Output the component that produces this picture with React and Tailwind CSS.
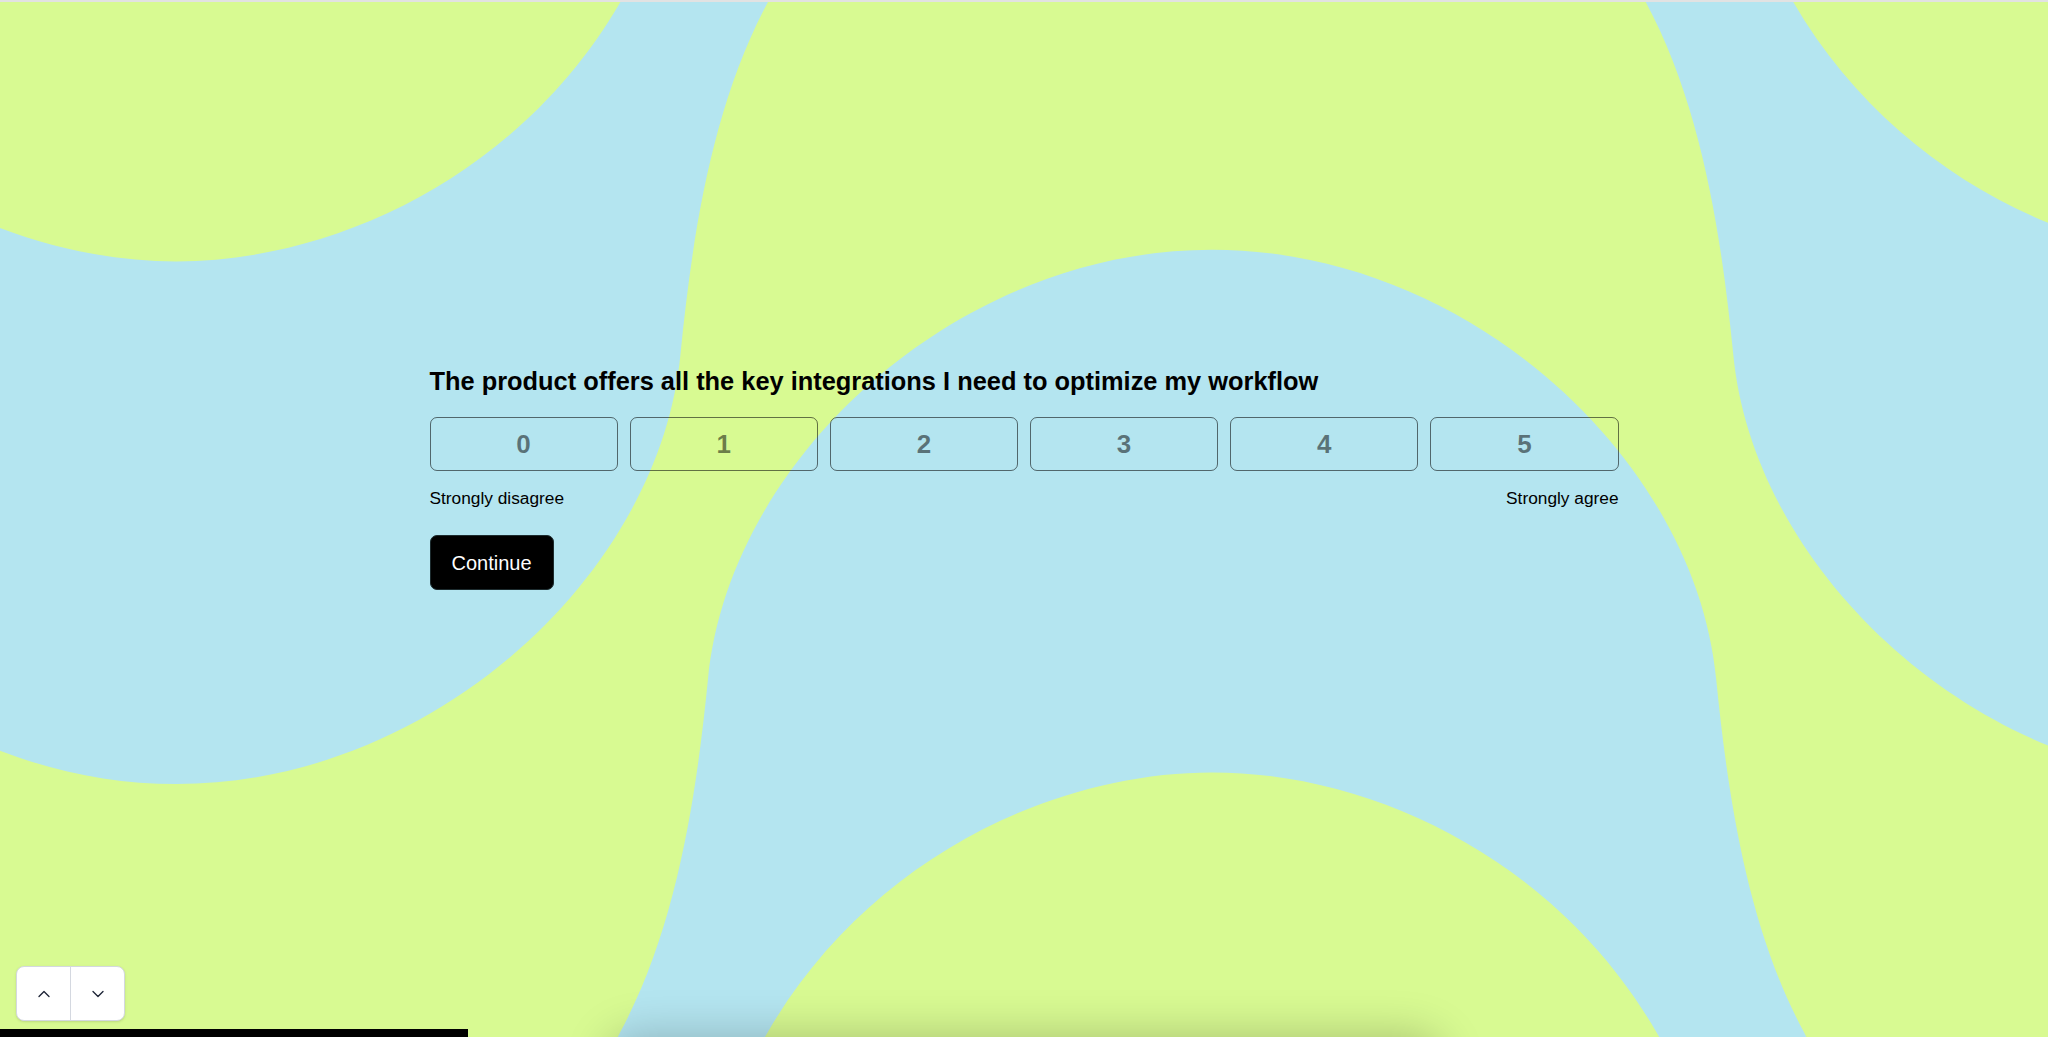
import { ChevronUp, ChevronDown } from 'lucide-react';

const OPTIONS = [0, 1, 2, 3, 4, 5];

// one blue U-shaped band, centred on x=135 (viewBox units); arms run a little past the edge
const BAND =
  'M 594 -12 L 588 0 C 545 80 530 180 521 270 C 505 440 330 600 135 600 C -60 600 -235 440 -251 270 ' +
  'C -260 180 -275 80 -318 0 L -324 -12 L -212 -12 L -205 0 C -130 130 10 199 135 199 C 260 199 400 130 475 0 L 482 -12 Z';

function Backdrop() {
  return (
    <svg className="absolute inset-0 w-full h-full" viewBox="0 0 1568 794" preserveAspectRatio="none">
      <rect width="1568" height="794" fill="#d8fa92" />
      <g fill="#b4e5f0">
        <path d={BAND} />
        <path d={BAND} transform="translate(1578 0)" />
        <path d={BAND} transform="matrix(-1 0 0 -1 1063 790)" />
      </g>
    </svg>
  );
}

export default function App() {
  return (
    <div className="relative w-full h-[1037px] overflow-hidden border-t-2 border-[#e2e2e2] font-['Liberation_Sans',Arial,sans-serif]">
      <Backdrop />

      <div className="relative flex justify-center pt-[363px]">
        <div className="w-[1189px]">
          <h1 className="text-[25.4px] leading-8 font-bold text-black">
            The product offers all the key integrations I need to optimize my workflow
          </h1>

          <div className="mt-5 grid grid-cols-6 gap-3">
            {OPTIONS.map((n) => (
              <button key={n} className="h-[54px] rounded-[7px] border border-black/55 text-[26px] font-bold text-black/50">
                {n}
              </button>
            ))}
          </div>

          <div className="mt-[15px] flex justify-between text-[17.3px] leading-6 text-black">
            <span>Strongly disagree</span>
            <span>Strongly agree</span>
          </div>

          <button className="mt-[25px] h-[55px] px-[21px] rounded-[7px] bg-black border border-[#1c2b2e] text-white text-[20px]">
            Continue
          </button>
        </div>
      </div>

      <div className="absolute left-4 top-[964px] flex h-[55px] w-[109px] rounded-lg border border-[#d4d8e0] bg-white shadow-sm">
        <button className="flex flex-1 items-center justify-center border-r border-[#d4d8e0] text-[#1e2537]">
          <ChevronUp className="w-5 h-5" strokeWidth={1.6} />
        </button>
        <button className="flex flex-1 items-center justify-center text-[#1e2537]">
          <ChevronDown className="w-5 h-5" strokeWidth={1.6} />
        </button>
      </div>

      <div className="absolute left-0 bottom-0 h-[8px] w-[468px] bg-black" />
      <div className="absolute left-[620px] top-[1045px] h-[120px] w-[810px] rounded-2xl shadow-[0_0_45px_12px_rgba(0,0,0,0.22)]" />
    </div>
  );
}
